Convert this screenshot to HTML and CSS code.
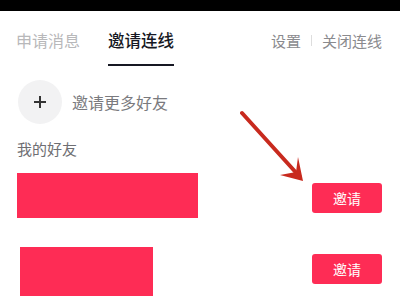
FILE: index.html
```html
<!DOCTYPE html>
<html lang="zh">
<head>
<meta charset="utf-8">
<link rel="stylesheet" href="styles.css">
</head>
<body>
<div class="topbar"></div>
<div class="sheet">
  <div class="tabs">
    <div class="tab">申请消息</div>
    <div class="tab active">邀请连线</div>
    <div class="actions">
      <span>设置</span>
      <span class="sep"></span>
      <span>关闭连线</span>
    </div>
  </div>
  <div class="add-row">
    <div class="add-circle">
      <svg width="16" height="16" viewBox="0 0 16 16"><path d="M8 2v12M2 8h12" stroke="#333" stroke-width="2"/></svg>
    </div>
    <span class="add-text">邀请更多好友</span>
  </div>
  <div class="section">我的好友</div>
  <div class="friend row1">
    <div class="mask mask1"></div>
    <button class="invite">邀请</button>
  </div>
  <div class="friend row2">
    <div class="mask mask2"></div>
    <button class="invite">邀请</button>
  </div>
  <svg class="arrow" width="80" height="80" viewBox="0 0 80 80">
    <path d="M2 3 L60 67" stroke="#c82a1e" stroke-width="4" stroke-linecap="round"/>
    <path d="M63 71 L58 47 L56 62 L40 65 Z" fill="#c82a1e"/>
  </svg>
</div>
</body>
</html>
```
FILE: styles.css
```css
html, body {
  margin: 0;
  padding: 0;
  background: #fff;
  font-family: "Noto Sans CJK SC", "Noto Sans", sans-serif;
}
.topbar {
  height: 11px;
  background: #000;
}
.sheet {
  position: relative;
  height: 289px;
  overflow: hidden;
}
.tabs {
  display: flex;
  align-items: center;
  height: 58px;
  padding: 0 18px 0 16px;
}
.tab {
  font-size: 16px;
  line-height: 22px;
  color: #b8b8ba;
  margin-right: 28px;
  position: relative;
}
.tab.active {
  color: #161823;
  font-weight: 500;
  font-size: 16.5px;
}
.tab.active::after {
  content: "";
  position: absolute;
  left: 0;
  right: 0;
  top: 35px;
  height: 2px;
  background: #161823;
}
.actions {
  margin-left: auto;
  display: flex;
  align-items: center;
  gap: 10px;
  font-size: 15px;
  color: #8a8a8e;
}
.sep {
  width: 1px;
  height: 11px;
  background: #ddd;
}
.add-row {
  display: flex;
  align-items: center;
  padding: 11px 0 0 18px;
}
.add-circle {
  width: 44px;
  height: 44px;
  border-radius: 50%;
  background: #f2f2f3;
  display: flex;
  align-items: center;
  justify-content: center;
}
.add-text {
  margin-left: 10px;
  font-size: 16px;
  color: #7a7a7e;
}
.section {
  padding: 14px 0 0 17px;
  font-size: 15px;
  line-height: 22px;
  color: #6e6e72;
}
.friend {
  display: flex;
  align-items: center;
  justify-content: space-between;
  padding-right: 18px;
}
.row1 {
  margin-top: 13px;
  height: 45px;
  padding-left: 17px;
}
.row2 {
  margin-top: 29px;
  height: 49px;
  padding-left: 20px;
}
.mask {
  background: #fe2c55;
  height: 100%;
}
.mask1 { width: 181px; }
.mask2 { width: 133px; }
.invite {
  width: 70px;
  height: 30px;
  border: 0;
  border-radius: 3px;
  background: #fe2c55;
  color: #fff;
  font-family: inherit;
  font-size: 14px;
  padding: 0;
}
.row1 .invite { margin-top: 5px; }
.row2 .invite { margin-top: -6px; }
.arrow {
  position: absolute;
  left: 240px;
  top: 99px;
}
```
